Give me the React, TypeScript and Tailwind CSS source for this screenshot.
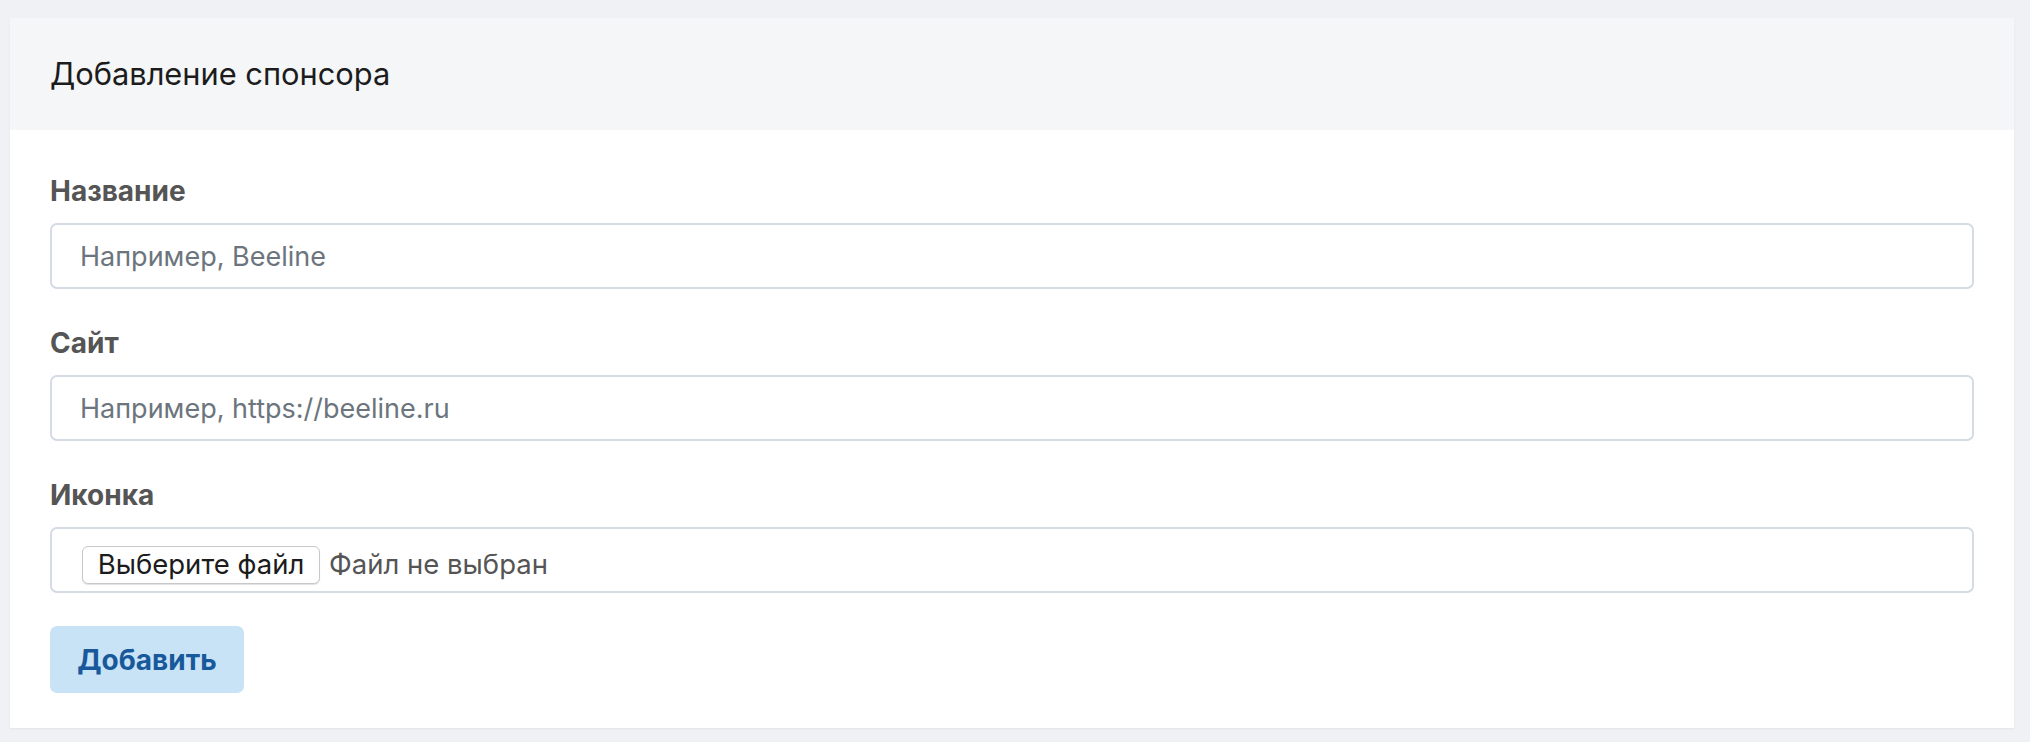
import React from "react";

const font = { fontFamily: "Inter, 'Noto Sans', sans-serif" };

function Field({ label, placeholder }: { label: string; placeholder: string }) {
  return (
    <div className="mb-[33px]">
      <label className="block text-[28px] leading-[42px] font-bold text-[#555555] mb-[11px]">{label}</label>
      <input
        type="text"
        placeholder={placeholder}
        className="block w-full h-[66px] rounded-[7px] border-2 border-[#d5dbe4] bg-white px-[28px] text-[27px] text-[#333] placeholder:text-[#6c757d] outline-none"
      />
    </div>
  );
}

export default function App() {
  return (
    <div className="min-h-screen bg-[#eff1f5] pt-[18px] pl-[10px] pr-[16px]" style={font}>
      <div className="bg-white shadow-[0_1px_2px_rgba(0,0,0,0.06)]">
        <div className="h-[112px] bg-[#f5f6f8] px-[40px] flex items-center">
          <h1 className="text-[30.8px] font-normal text-[#1c1c1c]">Добавление спонсора</h1>
        </div>
        <div className="px-[40px] pt-[40px] pb-[35px]">
          <Field label="Название" placeholder="Например, Beeline" />
          <Field label="Сайт" placeholder="Например, https://beeline.ru" />
          <div className="mb-[33px]">
            <label className="block text-[28px] leading-[42px] font-bold text-[#555555] mb-[11px]">Иконка</label>
            <div className="flex items-center h-[66px] rounded-[7px] border-2 border-[#d5dbe4] bg-white pl-[30px] pt-[9px]">
              <span className="inline-flex items-center justify-center h-[38px] w-[238px] rounded-[6px] border border-[#c8c8c8] bg-white shadow-[0_1px_1px_rgba(0,0,0,0.12)] text-[27.5px] text-[#1c1c1c]">
                Выберите файл
              </span>
              <span className="ml-[9px] text-[27.5px] text-[#555555]">Файл не выбран</span>
            </div>
          </div>
          <button className="flex items-center justify-center w-[194px] h-[67px] rounded-[7px] bg-[#c8e3f6] text-[28px] font-bold text-[#17599a]">
            Добавить
          </button>
        </div>
      </div>
    </div>
  );
}
